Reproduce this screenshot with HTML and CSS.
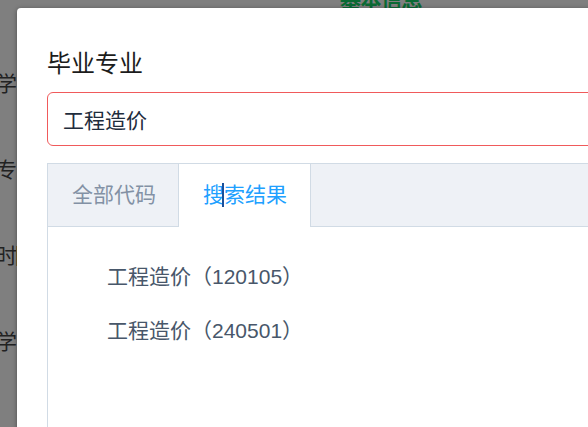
FILE: index.html
```html
<!DOCTYPE html>
<html lang="zh-CN">
<head>
<meta charset="utf-8">
<title>毕业专业</title>
<link rel="stylesheet" href="styles.css">
</head>
<body>
<div class="page">
  <div class="sec-title">基本信息</div>
  <div class="labels">
    <div class="label">学历</div>
    <div class="label">专业</div>
    <div class="label">时<span class="field-edge"></span></div>
    <div class="label">学位</div>
  </div>
</div>

<div class="dialog">
  <div class="dialog-title">毕业专业</div>
  <div class="input">工程造价</div>
  <div class="tabs">
    <div class="tab-header">
      <div class="tab">全部代码</div>
      <div class="tab active">搜索结果</div>
    </div>
    <div class="tab-body">
      <div class="item">工程造价（120105）</div>
      <div class="item">工程造价（240501）</div>
    </div>
  </div>
  <span class="cursor"></span>
</div>
</body>
</html>
```

FILE: styles.css
```css
html, body {
  margin: 0;
  padding: 0;
  width: 588px;
  height: 427px;
  overflow: hidden;
}

body {
  font-family: "Liberation Sans", "Noto Sans CJK SC", sans-serif;
  background: #7f7f7f;
  position: relative;
}

.page {
  height: 427px;
  background: #7f7f7f;
  overflow: hidden;
}

.sec-title {
  margin: -12px 0 0 340px;
  font-size: 21px;
  line-height: 24px;
  font-weight: bold;
  color: #0a6a34;
  letter-spacing: -0.5px;
}

.labels {
  margin: 29px 0 0 -4px;
  display: flex;
  flex-direction: column;
}

.label {
  font-size: 21px;
  line-height: 86px;
  height: 86px;
  color: #222;
  display: flex;
  align-items: center;
}

.field-edge {
  display: inline-block;
  width: 3px;
  height: 20px;
  margin-left: -1px;
  background: #7a6330;
}

.dialog {
  position: absolute;
  left: 17px;
  top: 8px;
  width: 660px;
  height: 520px;
  background: #fff;
  border-radius: 4px;
  box-shadow: 0 1px 5px rgba(0, 0, 0, 0.4);
  padding: 44px 0 0 30px;
  box-sizing: border-box;
}

.dialog-title {
  font-size: 24px;
  line-height: 24px;
  color: #1c1c1c;
}

.input {
  margin-top: 16px;
  height: 54px;
  box-sizing: border-box;
  border: 1px solid #f05a5b;
  border-radius: 6px;
  padding: 0 15px;
  display: flex;
  align-items: center;
  font-size: 21px;
  color: #1f2d3d;
}

.tabs {
  margin-top: 17px;
  border: 1px solid #d1dbe5;
  height: 400px;
  box-sizing: border-box;
}

.tab-header {
  display: flex;
  height: 62px;
  background: #eef1f6;
  border-bottom: 1px solid #d1dbe5;
}

.tab {
  padding: 0 23px 0 24px;
  font-size: 21px;
  line-height: 62px;
  color: #8391a5;
}

.tab.active {
  margin-left: -1px;
  height: 63px;
  background: #fff;
  color: #20a0ff;
  border-left: 1px solid #d1dbe5;
  border-right: 1px solid #d1dbe5;
}

.tab-body {
  padding: 23px 0 0 59px;
}

.item {
  font-size: 21px;
  line-height: 54px;
  color: #48576a;
}

.cursor {
  position: absolute;
  left: 205px;
  top: 175px;
  width: 2px;
  height: 24px;
  background: #1b4f9a;
}
```
